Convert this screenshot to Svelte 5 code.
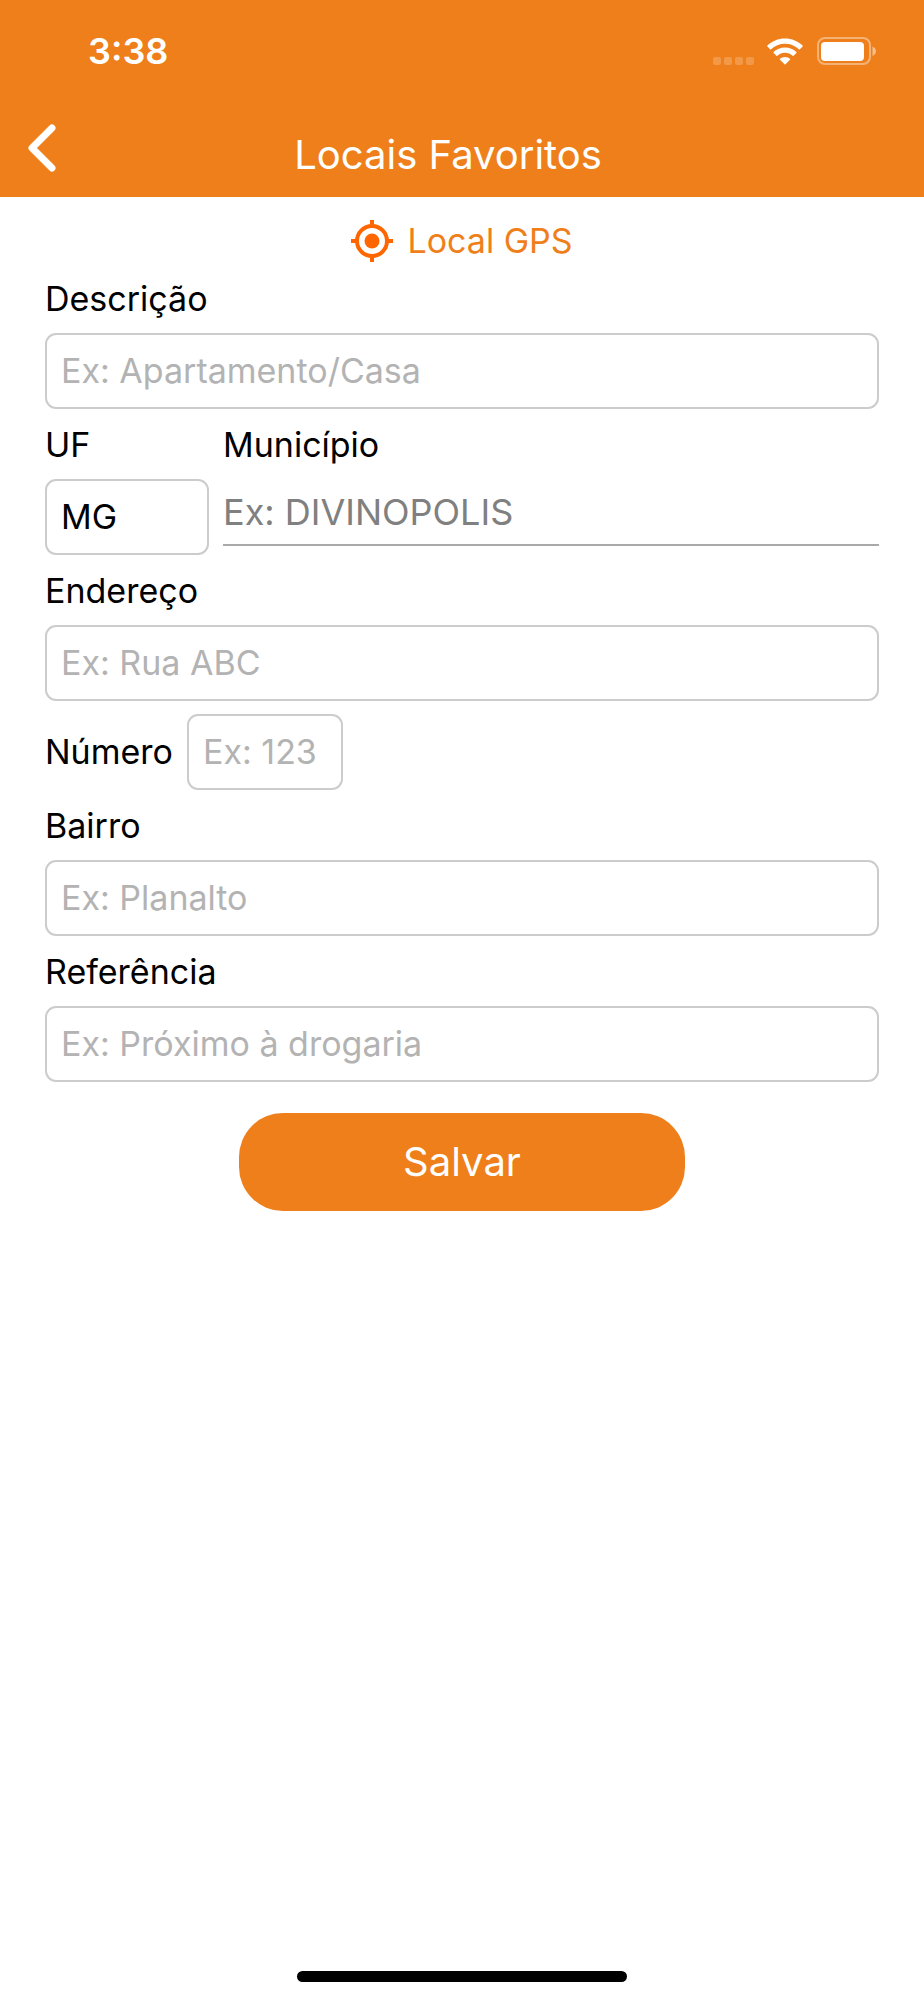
<script>
  let descricao = $state('');
  let uf = $state('MG');
  let municipio = $state('');
  let endereco = $state('');
  let numero = $state('');
  let bairro = $state('');
  let referencia = $state('');

  function salvar(event) {
    event.preventDefault();
  }
</script>

<div class="screen">
  <header>
    <div class="status-bar">
      <span class="time">3:38</span>
      <div class="status-icons">
        <svg class="signal" width="42" height="8" viewBox="0 0 42 8" aria-hidden="true">
          {#each [0, 11, 22, 33] as x}
            <rect {x} width="8" height="8" rx="2" fill="#fff" fill-opacity="0.2" />
          {/each}
        </svg>
        <svg class="wifi" width="36" height="27" viewBox="0 0 36 27" fill="#fff" aria-hidden="true">
          <path d="M18 0.5C24.9 0.5 31.2 3.2 35.6 7.6Q36 8.1 35.6 8.6L32.9 11.2Q32.4 11.6 31.9 11.2C28.3 7.7 23.4 5.7 18 5.7S7.7 7.7 4.1 11.2Q3.6 11.6 3.1 11.2L0.4 8.6Q0 8.1 0.4 7.6C4.8 3.2 11.1 0.5 18 0.5Z" />
          <path d="M18 9.5C22.4 9.5 26.4 11.2 29.4 14Q29.8 14.5 29.4 15L26.6 17.7Q26.1 18.1 25.6 17.7C23.6 15.9 20.9 14.8 18 14.8S12.4 15.9 10.4 17.7Q9.9 18.1 9.4 17.7L6.6 15Q6.2 14.5 6.6 14C9.6 11.2 13.6 9.5 18 9.5Z" />
          <path d="M18 19C19.9 19 21.7 19.7 23 20.8Q23.5 21.3 23 21.8L18.5 26.2Q18 26.7 17.5 26.2L13 21.8Q12.5 21.3 13 20.8C14.3 19.7 16.1 19 18 19Z" />
        </svg>
        <svg class="battery" width="60" height="28" viewBox="0 0 60 28" aria-hidden="true">
          <rect x="1" y="1" width="52" height="26" rx="7" fill="none" stroke="#fff" stroke-opacity="0.4" stroke-width="2" />
          <rect x="4" y="5" width="43" height="19" rx="4" fill="#fff" />
          <path d="M55.5 9.5C60 11.5 60 17 55.5 19Z" fill="#fff" fill-opacity="0.5" />
        </svg>
      </div>
    </div>
    <div class="nav-bar">
      <button type="button" class="back" aria-label="Voltar">
        <svg width="28" height="48" viewBox="0 0 28 48" aria-hidden="true">
          <path d="M24 4L4 24L24 44" fill="none" stroke="#fff" stroke-width="7" stroke-linecap="round" stroke-linejoin="round" />
        </svg>
      </button>
      <h1>Locais Favoritos</h1>
    </div>
  </header>

  <form onsubmit={salvar}>
    <button type="button" class="gps">
      <svg width="42" height="42" viewBox="0 0 42 42" aria-hidden="true">
        <circle cx="21" cy="21" r="15" fill="none" stroke="#ff6600" stroke-width="4" />
        <circle cx="21" cy="21" r="7.5" fill="#ff6600" />
        <path d="M21 0V6M21 36V42M0 21H6M36 21H42" stroke="#ff6600" stroke-width="4" />
      </svg>
      Local GPS
    </button>

    <div class="field">
      <label for="descricao">Descrição</label>
      <input id="descricao" type="text" placeholder="Ex: Apartamento/Casa" bind:value={descricao} />
    </div>

    <div class="row">
      <div class="field uf">
        <label for="uf">UF</label>
        <input id="uf" type="text" maxlength="2" bind:value={uf} />
      </div>
      <div class="field municipio">
        <label for="municipio">Município</label>
        <input id="municipio" type="text" placeholder="Ex: DIVINOPOLIS" bind:value={municipio} />
      </div>
    </div>

    <div class="field">
      <label for="endereco">Endereço</label>
      <input id="endereco" type="text" placeholder="Ex: Rua ABC" bind:value={endereco} />
    </div>

    <div class="numero">
      <label for="numero">Número</label>
      <input id="numero" type="text" inputmode="numeric" placeholder="Ex: 123" bind:value={numero} />
    </div>

    <div class="field">
      <label for="bairro">Bairro</label>
      <input id="bairro" type="text" placeholder="Ex: Planalto" bind:value={bairro} />
    </div>

    <div class="field">
      <label for="referencia">Referência</label>
      <input id="referencia" type="text" placeholder="Ex: Próximo à drogaria" bind:value={referencia} />
    </div>

    <button type="submit" class="salvar">Salvar</button>
  </form>

  <div class="home-indicator"></div>
</div>

<style>
  :global(body) {
    background: #fff;
  }

  .screen {
    display: flex;
    flex-direction: column;
    min-height: 100vh;
    color: #000;
    font-family: Inter, "Liberation Sans", sans-serif;
    font-size: 34px;
    line-height: 44px;
  }

  header {
    background: #ef7f1a;
    color: #fff;
  }

  .status-bar {
    display: flex;
    justify-content: space-between;
    align-items: center;
    height: 101px;
    padding: 0 47px 0 88px;
  }

  .time {
    font-size: 36px;
    font-weight: 600;
  }

  .status-icons {
    display: flex;
    align-items: flex-end;
  }

  .wifi {
    margin: 0 14px 0 12px;
  }

  .nav-bar {
    display: flex;
    align-items: center;
    height: 96px;
    padding: 0 28px 0 0;
  }

  .back {
    flex: none;
    width: 84px;
    height: 96px;
    padding: 0 0 2px 28px;
    text-align: left;
  }

  .back svg {
    display: block;
  }

  h1 {
    flex: 1;
    margin: 0;
    padding: 12px 84px 0 0;
    font-size: 40px;
    font-weight: 400;
    text-align: center;
  }

  button {
    border: 0;
    background: none;
    font: inherit;
    cursor: pointer;
  }

  form {
    display: flex;
    flex-direction: column;
    padding: 22px 45px;
  }

  .gps {
    display: flex;
    align-items: center;
    align-self: center;
    gap: 14px;
    padding: 0;
    color: #ef7f1a;
  }

  label {
    display: block;
  }

  .field label {
    padding: 14px 0 12px;
  }

  input {
    display: block;
    box-sizing: border-box;
    width: 100%;
    height: 76px;
    padding: 0 14px 2px;
    border: 2px solid #ccc;
    border-radius: 11px;
    background: #fff;
    color: #000;
    font: inherit;
  }

  input::placeholder {
    color: #b3b3b3;
    opacity: 1;
  }

  .row {
    display: flex;
    gap: 14px;
  }

  .uf {
    flex: none;
    width: 164px;
  }

  .municipio {
    flex: 1;
  }

  .municipio input {
    height: 67px;
    padding: 0;
    border-width: 0 0 2px;
    border-color: #a9a9a9;
    border-radius: 0;
    font-size: 36px;
  }

  .municipio input::placeholder {
    color: #808080;
  }

  .numero {
    display: flex;
    align-items: center;
    gap: 14px;
    margin-top: 13px;
  }

  .numero input {
    width: 156px;
  }

  .salvar {
    align-self: center;
    width: 446px;
    max-width: 100%;
    height: 98px;
    margin-top: 31px;
    border-radius: 44px;
    background: #ef7f1a;
    color: #fff;
    font-size: 40px;
  }

  .home-indicator {
    width: 330px;
    height: 11px;
    margin: auto auto 18px;
    border-radius: 6px;
    background: #000;
  }
</style>
